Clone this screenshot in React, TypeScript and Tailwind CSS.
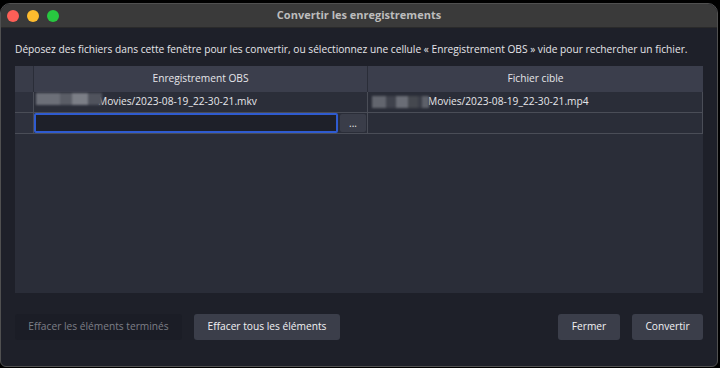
import { useState } from 'react';

const font = { fontFamily: '"Open Sans", "Noto Sans", sans-serif' };

function Blur({ blocks }: { blocks: [number, string][] }) {
  // pixelated blur over the private part of the path
  return (
    <div className="flex h-[12px] items-stretch blur-[1px]">
      {blocks.map(([w, c], i) => (
        <div key={i} style={{ width: w }} className={c} />
      ))}
    </div>
  );
}

export default function App() {
  const [value, setValue] = useState('');

  return (
    <div className="w-[720px] h-[368px] bg-black overflow-hidden pt-[3px]" style={font}>
      <div className="relative w-[718px] h-[364px] rounded-t-[10px] rounded-b-[6px] border border-[#505050] bg-[#1e2029] overflow-hidden flex flex-col">
        {/* title bar */}
        <div className="h-[24px] shrink-0 bg-[#3a3a3a] border-b border-[#2a2a2a] flex items-center relative">
          <div className="flex gap-[8px] pl-[6px]">
            <span className="w-[12px] h-[12px] rounded-full bg-[#fe5f57]" />
            <span className="w-[12px] h-[12px] rounded-full bg-[#febc2e]" />
            <span className="w-[12px] h-[12px] rounded-full bg-[#28c840]" />
          </div>
          <div className="absolute inset-0 flex items-center justify-center text-[11px] font-bold text-[#bdbdbd]">
            Convertir les enregistrements
          </div>
        </div>

        <div className="flex-1 flex flex-col px-[14px]">
          <p className="text-[10.2px] text-[#e6e6ea] pt-[14px] leading-[15px] whitespace-nowrap">
            Déposez des fichiers dans cette fenêtre pour les convertir, ou sélectionnez une cellule « Enregistrement OBS » vide pour rechercher un fichier.
          </p>

          {/* table */}
          <div className="mt-[9px] h-[227px] w-[688px] bg-[#2a2d38] flex flex-col">
            <div className="flex h-[26px] text-[10.2px] text-[#e6e6ea]">
              <div className="w-[19px] bg-[#393c49] border-r border-[#2a2d38]" />
              <div className="w-[334px] bg-[#3b3e4c] border-r border-[#2a2d38] flex items-center justify-center">
                Enregistrement OBS
              </div>
              <div className="flex-1 bg-[#3b3e4c] flex items-center justify-center">Fichier cible</div>
            </div>

            <div className="flex h-[21px] text-[10.2px] text-[#e6e6ea] border-b border-[#4a4d57]">
              <div className="w-[19px] bg-[#2e313d] border-r border-[#4a4d57]" />
              <div className="w-[334px] border-r border-[#4a4d57] flex items-center pl-[2px] bg-[#2b2e39]">
                <div className="relative flex items-center">
                  <div className="w-[62px]" />
                  <span>Movies/2023-08-19_22-30-21.mkv</span>
                  <div className="absolute left-0 top-[-1px]">
                    <Blur
                      blocks={[
                        [24, 'bg-[#6c6f78]'],
                        [12, 'bg-[#5a5d66]'],
                        [16, 'bg-[#7b7e86]'],
                        [14, 'bg-[#50535d]'],
                      ]}
                    />
                  </div>
                </div>
              </div>
              <div className="flex-1 flex items-center pl-[4px] border-r border-[#4a4d57]">
                <div className="flex items-center">
                  <Blur
                    blocks={[
                      [14, 'bg-[#62656e]'],
                      [10, 'bg-[#3f424c]'],
                      [12, 'bg-[#6a6d76]'],
                      [10, 'bg-[#45484f]'],
                      [4, 'bg-[#3a3d47]'],
                      [7, 'bg-[#5d6069]'],
                    ]}
                  />
                  <span className="ml-[-1px]">Movies/2023-08-19_22-30-21.mp4</span>
                </div>
              </div>
            </div>

            <div className="flex h-[21px] text-[10.2px] text-[#e6e6ea] border-b border-[#4a4d57]">
              <div className="w-[19px] bg-[#2e313d] border-r border-[#4a4d57]" />
              <div className="w-[334px] border-r border-[#4a4d57] flex items-center gap-[2px]">
                <input
                  value={value}
                  onChange={(e) => setValue(e.target.value)}
                  className="w-[304px] h-[20px] bg-[#1e2029] border-2 border-[#2f5bd0] rounded-[2px] outline-none px-[3px] text-[10.2px]"
                />
                <button className="flex-1 h-[18px] bg-[#3a3d49] rounded-[2px] text-[10px] leading-[10px] text-[#e6e6ea] mr-[1px]">
                  ...
                </button>
              </div>
              <div className="flex-1 border-r border-[#4a4d57]" />
            </div>
          </div>

          {/* buttons */}
          <div className="mt-[21px] flex items-center text-[10.2px]">
            <button className="h-[26px] w-[167px] rounded-[3px] bg-[#1b1d26] text-[#7d7f87]">
              Effacer les éléments terminés
            </button>
            <button className="ml-[12px] h-[26px] w-[146px] rounded-[3px] bg-[#3b3e4a] text-[#f2f2f4]">
              Effacer tous les éléments
            </button>
            <div className="flex-1" />
            <button className="h-[26px] w-[62px] rounded-[3px] bg-[#3b3e4a] text-[#f2f2f4]">Fermer</button>
            <button className="ml-[12px] h-[26px] w-[71px] rounded-[3px] bg-[#3b3e4a] text-[#f2f2f4]">Convertir</button>
          </div>
        </div>
      </div>
    </div>
  );
}
